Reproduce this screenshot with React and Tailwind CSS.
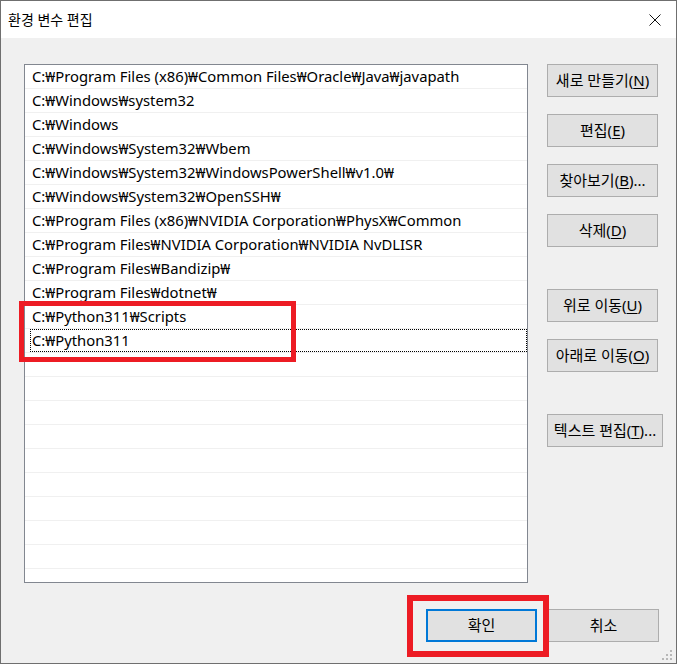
const paths = [
  'C:₩Program Files (x86)₩Common Files₩Oracle₩Java₩javapath',
  'C:₩Windows₩system32',
  'C:₩Windows',
  'C:₩Windows₩System32₩Wbem',
  'C:₩Windows₩System32₩WindowsPowerShell₩v1.0₩',
  'C:₩Windows₩System32₩OpenSSH₩',
  'C:₩Program Files (x86)₩NVIDIA Corporation₩PhysX₩Common',
  'C:₩Program Files₩NVIDIA Corporation₩NVIDIA NvDLISR',
  'C:₩Program Files₩Bandizip₩',
  'C:₩Program Files₩dotnet₩',
  'C:₩Python311₩Scripts',
  'C:₩Python311',
];

const rows = [...paths, ...Array(9).fill('')];

function Btn({ label, mnemonic, suffix = '', className = '' }) {
  return (
    <button
      className={`h-[33px] w-[111px] shrink-0 border border-[#adadad] bg-[#e1e1e1] text-[15px] text-black whitespace-nowrap flex items-center justify-center ${className}`}
    >
      {label}
      {mnemonic && (
        <>
          (<span className="underline underline-offset-2">{mnemonic}</span>)
        </>
      )}
      {suffix}
    </button>
  );
}

export default function App() {
  return (
    <div
      className="relative w-[677px] h-[664px] border border-[#6f6f6f] bg-[#f0f0f0] flex flex-col"
      style={{ fontFamily: '"Noto Sans", "Noto Sans CJK KR", sans-serif' }}
    >
      {/* title bar */}
      <div className="h-[37px] bg-white flex items-center justify-between pl-[7px] pr-[14px] shrink-0">
        <span className="text-[14px] text-black">환경 변수 편집</span>
        <svg width="12" height="12" viewBox="0 0 12 12" className="mr-[1px]">
          <path d="M0.5 0.5L11.5 11.5M11.5 0.5L0.5 11.5" stroke="#111" strokeWidth="1" />
        </svg>
      </div>

      <div className="flex-1 flex flex-col pl-[23px] pt-[26px] pr-[12px]">
        <div className="flex gap-[19px]">
          {/* list */}
          <div className="w-[504px] h-[519px] shrink-0 border border-[#828790] bg-white overflow-hidden">
            {rows.map((p, i) => (
              <div key={i} className="h-[24px] border-b border-[#f0f0f0] pl-[5px] flex">
                <div
                  className={`flex-1 flex items-center pl-[1px] border ${
                    i === 11 ? 'border-dotted border-black' : 'border-transparent'
                  } text-[14.8px] leading-none text-black whitespace-nowrap`}
                >
                  {p}
                </div>
              </div>
            ))}
          </div>

          {/* right buttons */}
          <div className="flex flex-col shrink-0">
            <Btn label="새로 만들기" mnemonic="N" />
            <Btn label="편집" mnemonic="E" className="mt-[17px]" />
            <Btn label="찾아보기" mnemonic="B" suffix="..." className="mt-[17px]" />
            <Btn label="삭제" mnemonic="D" className="mt-[17px]" />
            <Btn label="위로 이동" mnemonic="U" className="mt-[42px]" />
            <Btn label="아래로 이동" mnemonic="O" className="mt-[17px]" />
            <Btn label="텍스트 편집" mnemonic="T" suffix="..." className="mt-[42px] w-[116px]" />
          </div>
        </div>

        {/* bottom buttons */}
        <div className="flex justify-end gap-[11px] mt-[26px] pr-[5px]">
          <button className="h-[33px] w-[111px] border-2 border-[#0078d7] bg-[#e1e1e1] text-[15px] text-black">
            확인
          </button>
          <button className="h-[33px] w-[111px] border border-[#adadad] bg-[#e1e1e1] text-[15px] text-black">
            취소
          </button>
        </div>
      </div>

      {/* resize grip */}
      <svg width="12" height="12" viewBox="0 0 12 12" className="absolute right-[3px] bottom-[2px]">
        <rect x="9" y="1" width="2" height="2" fill="#b8b8b8" />
        <rect x="5" y="5" width="2" height="2" fill="#b8b8b8" />
        <rect x="9" y="5" width="2" height="2" fill="#b8b8b8" />
        <rect x="1" y="9" width="2" height="2" fill="#b8b8b8" />
        <rect x="5" y="9" width="2" height="2" fill="#b8b8b8" />
        <rect x="9" y="9" width="2" height="2" fill="#b8b8b8" />
      </svg>

      {/* annotation highlights */}
      <div className="absolute left-[18px] top-[300px] w-[277px] h-[61px] border-[5px] border-[#ed1c24] pointer-events-none" />
      <div className="absolute left-[406px] top-[594px] w-[142px] h-[62px] border-[6px] border-[#ed1c24] pointer-events-none" />
    </div>
  );
}
